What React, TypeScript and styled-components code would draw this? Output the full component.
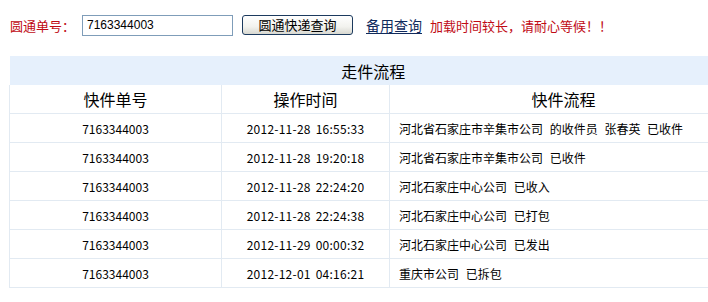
import styled, { createGlobalStyle } from "styled-components";

const GlobalStyle = createGlobalStyle`
  html, body {
    margin: 0;
    padding: 0;
    background: #ffffff;
    overflow: hidden;
  }
  body {
    font-family: "Noto Sans CJK SC", "Liberation Sans", sans-serif;
    font-size: 12px;
    color: #000;
  }
`;

const Page = styled.div`
  width: 708px;
  height: 302px;
  overflow: hidden;
`;

const SearchBar = styled.div`
  display: flex;
  align-items: center;
  height: 50px;
  padding: 0 0 0 10px;
`;

const Label = styled.span`
  color: #c00a14;
  font-size: 13px;
  width: 72px;
`;

const NumberInput = styled.input`
  box-sizing: border-box;
  width: 151px;
  height: 21px;
  border: 1px solid #7f9db9;
  padding: 0 4px;
  font-family: "Liberation Sans", "Noto Sans CJK SC", sans-serif;
  font-size: 12px;
  color: #000;
  outline: none;
`;

const QueryButton = styled.button`
  box-sizing: border-box;
  margin-left: 9px;
  width: 111px;
  height: 20px;
  border: 1px solid #1c3a5e;
  border-radius: 3px;
  background: linear-gradient(#ffffff, #f2f2ee 60%, #d8d8d0);
  font-family: "Noto Sans CJK SC", sans-serif;
  font-size: 13px;
  line-height: 16px;
  padding: 0;
  color: #000;
`;

const BackupLink = styled.a`
  margin-left: 13px;
  color: #102a5c;
  font-size: 14px;
  text-decoration: underline;
  text-underline-offset: 2px;
`;

const Notice = styled.span`
  margin-left: 8px;
  color: #c00a14;
  font-size: 13px;
`;

const FlowTable = styled.table`
  margin: 6px 0 0 9px;
  width: 728px;
  border-collapse: collapse;
  table-layout: fixed;
`;

const Title = styled.th`
  height: 29px;
  padding: 0;
  background: #e6f0fc;
  font-size: 16px;
  font-weight: normal;
  text-align: center;
  color: #000;
`;

const HeadCell = styled.th`
  height: 28px;
  padding: 0;
  font-size: 16px;
  font-weight: normal;
  text-align: center;
  border-left: 1px solid #e2eaf2;
  border-bottom: 1px solid #e2eaf2;
`;

const Cell = styled.td<{ $left?: boolean; $spaced?: boolean }>`
  height: 28px;
  padding: ${({ $left }) => ($left ? "0 0 0 9px" : "0")};
  text-align: ${({ $left }) => ($left ? "left" : "center")};
  font-size: 12px;
  letter-spacing: ${({ $spaced }) => ($spaced ? "0.25px" : "normal")};
  word-spacing: ${({ $left, $spaced }) =>
    $left ? "4px" : $spaced ? "2px" : "normal"};
  border-left: 1px solid #e2eaf2;
  border-bottom: 1px solid #e2eaf2;
  white-space: nowrap;
`;

const rows = [
  ["2012-11-28 16:55:33", "河北省石家庄市辛集市公司 的收件员 张春英 已收件"],
  ["2012-11-28 19:20:18", "河北省石家庄市辛集市公司 已收件"],
  ["2012-11-28 22:24:20", "河北石家庄中心公司 已收入"],
  ["2012-11-28 22:24:38", "河北石家庄中心公司 已打包"],
  ["2012-11-29 00:00:32", "河北石家庄中心公司 已发出"],
  ["2012-12-01 04:16:21", "重庆市公司 已拆包"],
];

export default function App() {
  return (
    <Page>
      <GlobalStyle />
      <SearchBar>
        <Label>圆通单号：</Label>
        <NumberInput defaultValue="7163344003" />
        <QueryButton>圆通快递查询</QueryButton>
        <BackupLink href="#">备用查询</BackupLink>
        <Notice>加载时间较长，请耐心等候！！</Notice>
      </SearchBar>
      <FlowTable>
        <colgroup>
          <col style={{ width: 212 }} />
          <col style={{ width: 168 }} />
          <col />
        </colgroup>
        <thead>
          <tr>
            <Title colSpan={3}>走件流程</Title>
          </tr>
          <tr>
            <HeadCell>快件单号</HeadCell>
            <HeadCell>操作时间</HeadCell>
            <HeadCell>快件流程</HeadCell>
          </tr>
        </thead>
        <tbody>
          {rows.map(([time, flow]) => (
            <tr key={time}>
              <Cell>7163344003</Cell>
              <Cell $spaced>{time}</Cell>
              <Cell $left>{flow}</Cell>
            </tr>
          ))}
        </tbody>
      </FlowTable>
    </Page>
  );
}
